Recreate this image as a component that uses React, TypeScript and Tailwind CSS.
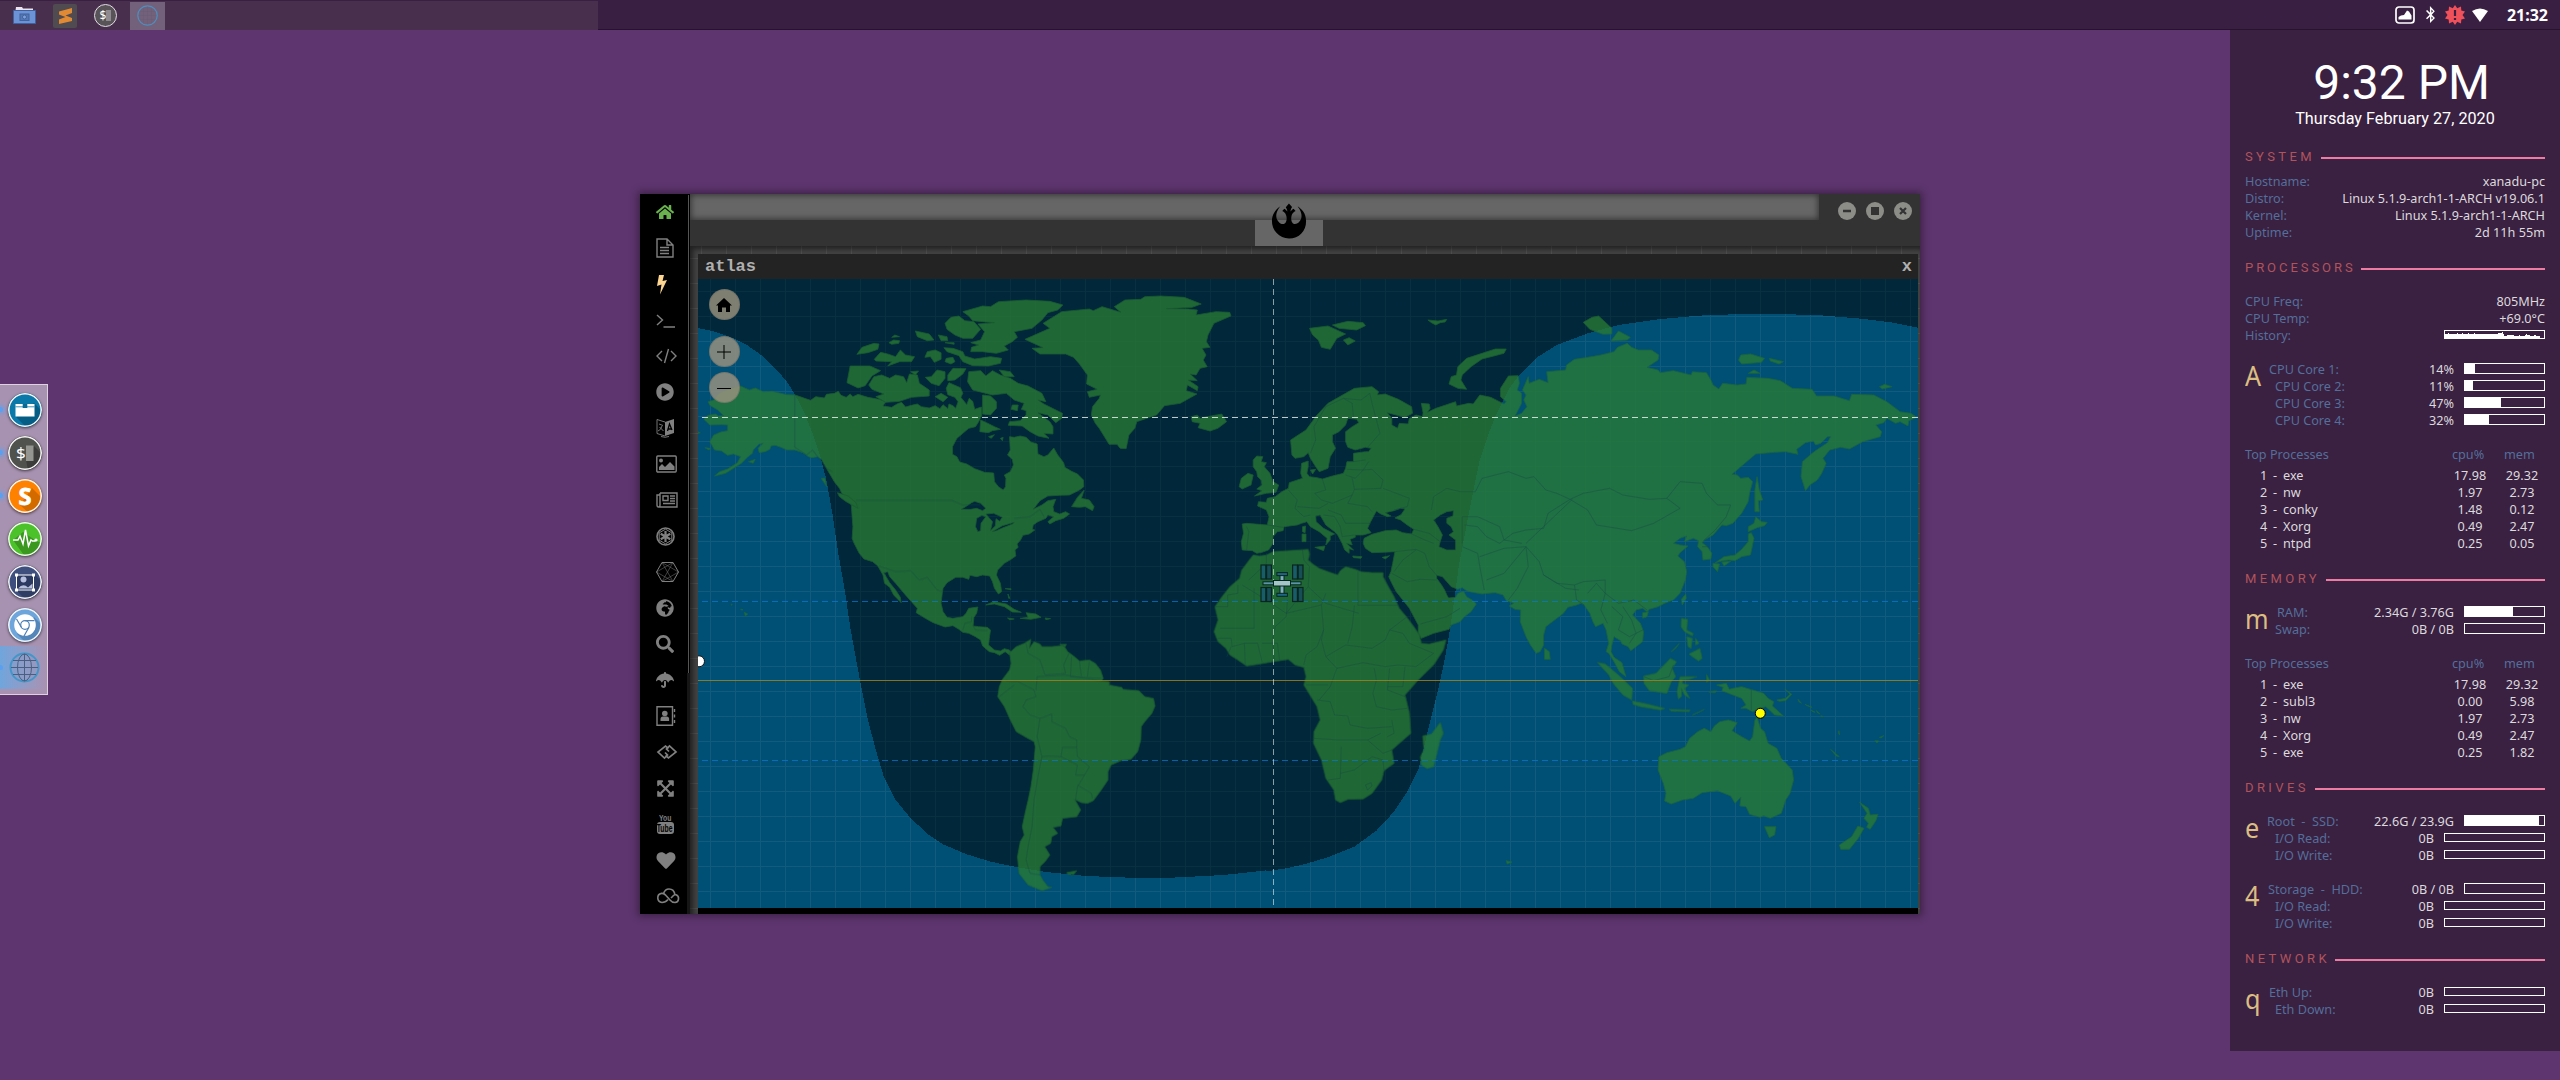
import React from "react";
import { FaHome, FaSearch, FaHeart, FaUmbrella, FaRebel, FaPlayCircle, FaExpandArrowsAlt, FaGlobeAfrica, FaBluetoothB } from "react-icons/fa";

/* ---------- map data: west and east halves use their own local units ---------- */

const WEST_LAND = [
  // North and Central America
  "M128 378L150 390L165 384L185 395L208 394L245 404L266 405L290 415L305 421L318 410L340 414L345 403L365 400L375 394L382 406L395 412L405 402L412 410L425 403L450 412L478 418L495 425L488 438L510 442L525 431L535 427L545 441L560 436L575 432L585 440L605 444L620 437L632 446L640 434L652 446L655 432L665 437L672 445L678 425L670 412L652 404L648 385L655 368L670 376L684 383L690 400L685 412L700 434L706 415L715 424L720 448L737 441L738 466L730 485L722 500L705 505L690 520L675 535L664 560L664 583L675 590L682 606L700 612L720 626L745 637L768 639L770 665L780 680L792 690L798 680L799 655L795 645L810 635L818 615L815 598L803 585L810 570L808 530L820 532L835 528L850 532L862 546L878 552L880 582L895 590L905 585L920 564L930 585L945 608L948 622L965 634L980 642L995 660L996 680L985 690L960 705L935 706L905 708L885 722L868 748L890 735L905 722L925 718L918 740L920 755L935 762L950 755L960 762L945 775L925 782L910 792L905 785L920 770L905 765L900 775L880 785L868 795L866 808L872 810L858 822L842 826L836 840L827 852L830 862L822 870L824 888L812 898L795 910L778 930L775 945L785 970L788 995L780 1002L770 985L765 965L758 948L740 945L725 950L708 946L705 958L690 952L672 952L650 968L640 985L638 1000L635 1030L640 1055L650 1072L665 1075L690 1070L698 1060L705 1045L728 1041L725 1060L718 1072L716 1098L730 1100L752 1102L760 1110L757 1135L755 1155L770 1170L785 1173L795 1166L808 1170L812 1178L808 1185L797 1175L783 1186L770 1178L757 1175L740 1158L735 1140L722 1130L705 1120L690 1117L680 1108L665 1097L645 1101L615 1088L595 1075L572 1058L575 1045L560 1025L545 1005L520 970L505 950L500 935L490 938L505 968L520 990L532 1012L534 1028L515 1005L505 982L492 970L488 945L475 918L462 905L440 897L428 880L415 850L410 835L412 800L410 770L408 735L398 714L385 702L378 685L365 665L355 645L345 625L332 597L322 590L308 593L300 590L285 578L265 570L245 570L230 562L215 556L205 558L202 568L190 575L175 578L172 565L185 550L175 552L160 570L158 580L145 592L130 610L110 625L90 640L62 648L75 635L95 627L120 608L128 590L110 582L95 586L80 573L62 570L55 555L50 545L60 525L78 516L95 512L95 495L80 494L50 495L35 478L45 466L65 462L72 468L85 467L70 450L50 436L46 425L60 420L75 400L100 388ZM686 748L700 738L712 728L720 724L735 730L748 745L740 752L725 745L710 748ZM738 766L725 775L722 800L728 815L735 812L736 790L748 770ZM748 762L768 760L790 772L783 784L774 776L772 798L760 812L765 785ZM764 815L790 797L820 787L816 792L790 804L775 812Z",
  // Canadian archipelago
  "M405 318L455 318L482 332L460 348L443 377L425 384L397 368ZM452 375L465 350L485 345L505 355L520 345L540 350L548 368L555 342L575 345L580 370L605 390L605 408L560 412L530 424L495 427L470 410L490 402L460 388ZM422 283L435 262L465 250L478 252L475 268L450 278ZM466 298L482 277L500 282L520 290L532 270L545 285L568 290L560 305L530 305L500 318L510 305L470 303ZM503 248L515 240L530 242L528 250L510 253ZM510 232L518 225L530 230ZM570 213L605 222L617 240L600 242L575 230ZM628 225L650 230L652 242L635 242ZM645 248L668 248L668 253ZM594 292L600 275L620 270L635 278L635 298L618 307L608 290ZM648 295L665 292L670 305L660 312L645 305Z",
  "M642 263L665 265L690 275L695 288L720 297L760 290L788 295L785 310L755 318L715 317L690 305L680 287L650 275ZM645 190L660 172L680 168L695 182L718 185L735 208L715 235L690 235L670 225L650 208ZM690 155L740 138L760 140L780 125L850 120L910 124L943 135L930 150L905 158L890 180L865 205L820 215L828 232L815 245L795 258L805 270L775 280L740 275L710 275L712 262L730 255L710 248L735 240L745 215L728 192L770 188L740 185L715 182L705 168Z",
  "M705 335L735 332L748 348L765 332L785 345L810 355L830 370L855 378L890 400L900 425L880 420L895 432L942 460L940 475L925 488L905 465L880 458L910 485L918 500L918 522L895 520L908 535L880 528L860 515L840 498L805 496L808 485L835 482L850 465L850 452L838 448L845 430L820 420L800 400L765 405L715 390L702 365ZM782 330L810 335L820 350L795 350ZM652 345L665 325L698 326L690 342L670 360L652 362ZM595 352L610 350L625 330L645 335L645 355L630 377L610 370ZM620 410L635 400L652 412L640 425ZM740 405L760 408L775 425L775 445L760 465L740 462ZM733 515L735 480L750 488L770 500L785 508L765 512L755 518ZM815 435L830 435L828 452L812 448ZM755 530L770 524L762 535ZM785 535L792 532L790 542ZM558 335L578 333L570 345Z",
  "M965 740L980 712L997 690L990 715L1010 720L1022 740L1018 752L1000 740L985 742ZM373 698L400 708L420 728L425 745L395 725L378 710ZM332 655L341 654L346 680ZM148 605L165 598L160 610ZM38 563L52 565L48 570ZM20 515L26 518L20 521Z",
  // Greenland and Iceland
  "M847 238L910 205L893 190L940 155L1010 147L1020 152L1042 140L1090 157L1073 140L1100 120L1140 118L1150 110L1190 108L1250 112L1293 132L1270 142L1205 146L1260 147L1283 150L1280 165L1330 155L1365 157L1368 168L1325 190L1310 225L1306 245L1315 262L1295 265L1305 285L1298 300L1308 320L1290 325L1280 345L1265 342L1283 362L1260 360L1285 380L1283 392L1258 375L1255 392L1282 402L1240 430L1200 437L1180 465L1130 485L1125 505L1110 525L1103 566L1088 565L1080 553L1060 553L1035 505L1025 490L1015 465L1018 440L1035 415L1038 405L1010 412L1005 395L1030 388L1003 372L1005 345L985 312L970 292L950 282L885 282L865 265L893 263Z",
  "M1268 470L1283 465L1290 475L1308 470L1345 462L1357 485L1335 505L1315 513L1285 503L1290 490L1270 485Z",
  // Caribbean and Hawaii
  "M748 1035L768 1025L800 1032L820 1048L838 1057L815 1056L795 1040L770 1032ZM835 1075L855 1072L850 1058L875 1062L888 1072L862 1078ZM803 1074L820 1077L808 1079ZM898 1074L912 1076L900 1079ZM797 986L812 986L812 989ZM804 1002L809 1015L806 1015ZM137 1057L146 1062L140 1068ZM128 1047L134 1049L131 1051ZM104 1032L107 1034L105 1036Z",
  // South America
  "M808 1178L825 1160L845 1150L862 1138L858 1165L870 1145L885 1152L890 1160L915 1160L930 1158L945 1156L955 1175L970 1188L985 1203L1010 1200L1025 1210L1038 1230L1045 1255L1040 1263L1060 1265L1060 1275L1092 1282L1095 1288L1135 1292L1150 1310L1172 1315L1176 1338L1168 1360L1150 1385L1141 1400L1140 1440L1132 1475L1115 1498L1090 1502L1065 1515L1057 1535L1057 1560L1040 1590L1020 1622L1005 1630L990 1628L973 1618L988 1650L978 1670L942 1675L938 1698L918 1702L930 1720L915 1730L912 1750L897 1760L910 1785L898 1805L885 1820L885 1845L892 1860L905 1880L915 1882L890 1892L855 1875L832 1840L828 1790L835 1745L845 1725L840 1700L848 1655L855 1620L862 1580L868 1530L873 1460L870 1445L850 1432L825 1415L810 1380L795 1340L778 1310L782 1280L790 1258L808 1230L812 1210ZM952 1838L978 1832L970 1844L955 1842ZM935 1153L952 1153L948 1160Z",
];

const EAST_LAND = [
  // Eurasia with the Caspian Sea cut out
  "M115 540L150 510L175 465L200 430L240 400L260 385L300 380L315 395L312 405L330 402L360 418L390 440L392 460L375 472L335 458L345 475L345 495L358 505L362 490L382 492L385 475L400 465L415 470L416 458L412 430L430 432L432 445L426 457L445 445L490 425L492 438L520 430L530 432L545 405L570 412L600 432L605 425L592 410L592 385L610 348L632 347L635 370L630 390L640 400L640 430L625 468L640 460L652 440L645 420L650 405L642 390L655 350L657 370L680 358L700 368L697 335L740 330L742 315L760 298L790 292L820 285L850 275L858 262L880 250L890 262L905 270L935 270L952 285L950 300L925 322L950 330L955 338L985 332L1025 345L1028 335L1060 338L1070 360L1075 375L1088 387L1097 370L1130 375L1150 372L1152 352L1200 355L1228 362L1255 385L1300 388L1310 408L1350 408L1385 422L1390 403L1440 405L1470 425L1500 455L1525 460L1538 472L1520 482L1518 498L1500 485L1490 490L1470 475L1463 488L1445 495L1458 515L1455 530L1415 545L1385 567L1365 562L1340 570L1325 595L1332 610L1322 640L1312 660L1295 675L1285 692L1275 650L1278 605L1300 580L1310 570L1335 548L1342 530L1335 530L1320 550L1308 555L1303 543L1285 548L1265 568L1268 583L1240 575L1215 577L1172 582L1118 643L1130 645L1138 655L1155 652L1165 665L1158 700L1155 725L1140 760L1120 790L1105 797L1095 795L1075 825L1055 840L1050 848L1062 860L1072 880L1070 897L1052 900L1050 875L1040 860L1042 842L1030 835L1010 845L1015 828L1000 835L985 850L1000 855L1018 858L1000 878L995 888L1010 905L1015 935L1012 960L1000 1000L985 1020L965 1030L950 1040L930 1048L925 1055L915 1045L900 1050L892 1065L910 1090L917 1115L915 1145L900 1160L888 1172L882 1160L868 1152L865 1142L850 1130L845 1155L843 1175L850 1192L868 1208L877 1250L862 1235L850 1205L838 1180L832 1175L838 1150L832 1110L825 1090L808 1100L802 1085L795 1060L782 1035L775 1030L765 1035L745 1042L735 1060L720 1075L705 1090L695 1100L690 1125L690 1155L682 1175L673 1180L660 1155L650 1130L637 1085L638 1050L625 1048L612 1038L622 1030L605 1022L598 1005L580 998L550 1002L525 996L515 992L505 983L495 988L480 980L470 965L460 950L447 946L447 955L458 975L465 990L470 1005L474 1014L490 1012L495 1000L508 994L515 1010L530 1022L537 1032L525 1055L510 1070L500 1085L480 1095L475 1108L440 1120L412 1135L405 1120L405 1095L395 1070L385 1045L370 1020L355 995L345 970L338 950L343 935L347 910L352 875L325 877L300 878L285 865L280 850L282 835L300 823L330 812L355 810L370 818L390 822L395 808L380 795L365 780L352 774L366 764L375 747L365 745L350 752L330 758L343 768L335 770L320 762L310 753L305 765L295 790L290 805L298 818L280 825L262 825L262 832L250 838L255 855L242 850L258 870L248 866L248 880L238 870L232 850L222 825L215 815L195 795L182 765L172 768L173 785L190 805L215 822L205 828L205 840L195 855L198 835L180 815L160 800L152 785L140 790L130 795L100 800L98 812L85 815L75 830L75 850L65 870L50 877L38 880L28 872L5 870L3 845L8 820L5 792L15 790L62 795L66 770L60 750L40 738L42 725L60 727L62 715L80 710L95 695L110 685L112 668L135 658L142 655L138 640L140 610L155 603L155 620L152 640L158 650L175 653L187 657L210 648L235 640L240 625L243 605L258 605L258 580L285 575L292 575L298 565L285 562L262 570L245 562L240 545L240 515L255 500L270 488L265 478L245 475L240 495L225 515L210 525L210 545L217 565L205 590L200 625L180 635L172 620L160 595L155 578L145 590L125 595L118 585ZM470 755L485 752L484 768L470 775L470 790L480 800L485 815L475 825L490 840L490 870L470 870L452 860L455 845L460 825L450 800L440 780L455 765Z",
  // British Isles and Mediterranean islands
  "M30 600L38 588L52 590L48 605L60 608L55 620L68 640L75 665L88 675L82 697L60 700L33 708L50 692L38 687L50 675L48 660L40 650L38 635L30 620ZM3 655L18 640L30 645L25 675L5 687L-2 680ZM142 800L149 798L148 818L142 815ZM141 822L150 822L150 845L141 845ZM170 862L193 858L190 872ZM256 888L277 890L275 895L258 893ZM323 892L340 887L330 897ZM160 630L172 628L165 642Z",
  // Arctic islands
  "M158 205L200 198L240 222L220 235L205 268L185 262L178 240L165 225ZM210 195L245 184L280 188L285 197L265 210L225 205ZM235 240L248 233L262 243L245 255ZM427 180L450 183L470 178L466 186L455 188L445 195L435 188ZM605 267L600 280L550 297L525 320L505 345L502 360L515 388L495 385L475 372L480 350L492 345L495 320L515 295L550 280L580 267ZM780 187L800 172L815 168L845 205L845 222L825 223L795 208ZM843 243L860 213L887 232L880 240ZM1133 300L1138 285L1160 282L1192 295L1185 307L1140 312ZM1203 295L1235 305L1225 312L1205 303ZM1155 340L1168 330L1182 340ZM1453 380L1465 373L1482 380L1460 387Z",
  // Japan, Taiwan and neighbours
  "M1175 650L1180 690L1188 720L1178 722L1180 755L1170 755L1170 690ZM1172 770L1185 785L1198 787L1192 797L1175 803L1155 815L1155 800L1168 790ZM1162 818L1168 835L1160 885L1140 890L1125 902L1110 900L1095 903L1080 908L1100 890L1125 885L1140 868L1155 845L1155 822ZM1075 910L1090 912L1085 935L1075 920ZM1095 906L1115 904L1100 918ZM1013 1002L1014 1015L1005 1035L1003 1018ZM915 1058L928 1055L925 1070L915 1075ZM692 1165L703 1175L705 1198L692 1198Z",
  // South-east Asia
  "M812 1207L830 1212L860 1245L892 1285L890 1320L870 1305L848 1270L838 1245ZM892 1323L925 1332L965 1345L955 1350L910 1340L893 1333ZM917 1248L945 1240L978 1195L992 1205L982 1225L990 1250L980 1265L970 1300L930 1292L918 1270ZM1000 1250L1038 1250L1020 1258L1005 1260L1005 1270L1020 1275L1010 1285L1022 1315L1010 1305L1003 1285L1003 1310L996 1317L993 1295ZM1003 1075L1017 1078L1015 1110L1030 1120L1028 1128L1010 1115L1002 1100ZM1020 1182L1045 1165L1050 1195L1042 1203L1030 1192ZM1015 1130L1028 1135L1025 1165L1018 1160ZM980 1175L998 1150L990 1165ZM1035 1135L1043 1150L1035 1155ZM1060 1243L1067 1260L1060 1267ZM1065 1296L1083 1292L1080 1298ZM1028 1365L1055 1348L1040 1358ZM975 1348L1023 1350L1020 1355L980 1353Z",
  "M1083 1275L1105 1270L1112 1288L1120 1285L1140 1280L1190 1300L1200 1315L1213 1325L1210 1338L1235 1368L1215 1365L1195 1340L1180 1345L1165 1355L1150 1345L1138 1345L1150 1335L1140 1315L1110 1300L1095 1292L1098 1282ZM1220 1320L1240 1315L1250 1303L1238 1287L1254 1303L1240 1322L1225 1324ZM1268 1318L1276 1330L1270 1325ZM1284 1333L1300 1342L1288 1337ZM1298 1350L1307 1357L1300 1354ZM1310 1352L1318 1362L1312 1358ZM1320 1367L1326 1370L1321 1370ZM1361 1412L1363 1425L1360 1420ZM1342 1468L1362 1490L1355 1488ZM1443 1442L1452 1443L1447 1449ZM1453 1432L1463 1427L1457 1434Z",
  // Australia and New Zealand
  "M965 1623L968 1600L962 1570L950 1530L952 1490L970 1478L1000 1468L1012 1460L1022 1435L1040 1415L1055 1405L1070 1415L1078 1398L1090 1385L1110 1380L1130 1388L1118 1412L1140 1430L1158 1443L1165 1430L1170 1380L1175 1372L1183 1405L1192 1415L1200 1450L1220 1465L1230 1495L1255 1530L1258 1560L1250 1600L1240 1620L1230 1660L1205 1675L1190 1667L1182 1672L1158 1663L1150 1640L1136 1638L1138 1612L1125 1630L1115 1608L1085 1592L1050 1598L1030 1615L1005 1620L980 1632ZM1192 1700L1218 1700L1215 1725L1203 1733ZM1408 1627L1428 1645L1432 1665L1450 1663L1445 1682L1432 1708L1424 1702L1428 1690L1418 1675L1425 1660ZM1404 1698L1418 1705L1405 1735L1385 1768L1365 1768L1362 1755L1390 1730ZM605 1802L618 1806L607 1812Z",
  // Africa and Madagascar
  "M30 885L45 888L60 885L75 875L155 868L158 882L155 900L165 912L180 925L200 935L222 945L228 932L240 920L262 928L275 935L300 938L325 938L325 950L335 975L350 1010L362 1045L378 1070L395 1100L408 1125L412 1150L430 1152L468 1140L462 1170L440 1215L405 1260L375 1305L385 1360L388 1420L345 1470L350 1510L327 1532L322 1560L300 1600L280 1617L245 1618L228 1628L217 1620L213 1590L195 1555L185 1500L167 1450L168 1415L182 1380L175 1340L145 1275L150 1250L145 1222L125 1215L110 1198L75 1205L45 1212L15 1218L-5 1200L-23 1185L-32 1165L-50 1145L-59 1115L-50 1080L-57 1040L-41 1010L-23 980L-1 955L4 930L21 900ZM455 1387L462 1420L455 1440L440 1520L425 1526L412 1515L410 1490L418 1468L415 1428L435 1422Z",
];

const WEST_BORDERS =
  "M265 405L265 562L295 585L310 570L345 625L360 635M420 721L662 721L690 735L735 735M820 775L860 770L885 748L895 770M478 918L520 935L558 932L580 960L600 952L625 990L638 995M712 1070L712 1085L695 1090L690 1110M716 1098L722 1110L752 1112M850 1150L855 1180L885 1200L898 1245L950 1240L945 1215L958 1180M965 1190L962 1250L1040 1255M985 1205L990 1248M1010 1205L1005 1250M800 1262L830 1265L870 1290L875 1310L850 1320L842 1340L860 1365L885 1375L915 1362L915 1385L950 1405L960 1430L978 1440L978 1462L942 1462L938 1490L980 1515L975 1545L998 1545L1010 1520L980 1490L978 1462M782 1310L820 1275M885 1375L878 1430L890 1490L905 1488L938 1490M890 1490L880 1550L870 1620L865 1700L855 1760L850 1800L860 1840L885 1845M998 1545L980 1580L975 1618M980 1575L1015 1600L1018 1615M1040 1263L950 1245L878 1250L875 1290";

const EAST_BORDERS =
  "M160 580L172 540L168 500L195 440L235 415L255 430L258 475M235 415L275 420L295 400L300 430L318 520L290 562M258 605L285 600M243 628L280 630L292 605M240 645L262 655L280 630L300 628L325 660L320 685L260 688L255 655M187 657L195 690L170 700L185 720L210 730L255 705M110 690L130 720L125 745L145 770L160 765M130 740L180 745L200 730M260 688L255 705L245 730L290 740L300 755M325 685L385 715L380 740L350 750M200 750L230 765L240 790L280 790L298 790M190 765L215 770L228 800L232 830L260 825M62 795L98 802M15 800L20 815L15 870M395 808L430 820L455 845M390 822L420 840L440 850M352 875L400 868L420 880L430 920L447 946M350 935L370 900L400 870M345 940L380 965L410 958L447 960M435 750L440 710L470 685L500 695L535 695L550 655L610 635L650 655L668 650L695 690L720 700L750 718L700 760L690 805L650 810L620 820L590 850L560 830L540 800L510 795M505 850L505 770L540 770L590 800L600 840L640 850M505 860L540 880L545 920L555 990M545 890L600 865L650 860L600 940L560 960M650 860L680 905L690 945L720 970L760 975L780 965L830 960L830 1000L860 1030L895 1020L925 1050M690 945L740 985L770 990M610 1020L630 985L655 920L650 860M750 718L780 700L840 685L870 705L930 718L970 715L1000 745L940 790L890 812L810 795L790 750L750 718M970 715L1000 665L1050 670L1060 700L1085 735L1115 735L1105 770L1080 810L1055 840M760 975L765 1020L782 1035M790 1000L810 970L830 1000L820 1050L835 1090M845 1040L870 1070L860 1110L885 1130L915 1110M870 1040L890 1080L900 1120L885 1150M755 718L650 850M1162 1287L1162 1350M918 1250L940 1262L975 1250L985 1215M1050 860L1065 860M410 1092L470 1070L500 1045M20 960L60 910L60 880M142 870L145 900L158 920L155 980L195 1030L270 1060M268 935L268 1036L360 1036M155 980L105 1060L60 1020L5 975M32 985L32 1105L-45 1105M108 1020L105 1070L80 1100L75 1135M105 1060L185 1035L195 1000M185 1035L190 1110L175 1160L150 1185L145 1215M-5 975L-5 1000L-28 1005L-28 1040L-57 1040M-50 1135L-20 1135L-18 1160L10 1150L40 1150L50 1205M50 1150L85 1150L90 1200M75 1145L78 1205M-20 1160L-30 1190M10 1150L12 1215M190 1110L185 1140L195 1190L240 1155L300 1165L330 1140L340 1110L380 1070M260 1036L255 1100L245 1150M195 1190L220 1225L280 1208L330 1220L360 1215L400 1220L440 1180L385 1150L370 1120L340 1110M220 1225L205 1280L180 1320M305 1225L310 1260L302 1300L310 1340L345 1350L380 1345M150 1275L200 1275M175 1320L205 1325L215 1365L245 1368L250 1395L290 1405L345 1400M167 1435L225 1440L290 1440L320 1420M230 1460L228 1555L200 1560M228 1540L260 1530L300 1490L325 1500L327 1530M290 1440L325 1480L345 1470M345 1380L350 1420L335 1430M285 1575L298 1568L300 1578L290 1590L285 1575M375 1220L370 1280L335 1280M340 1225L335 1290L375 1310";

const WEST_NIGHT =
  "M20 50L20 204L60 214L100 230L140 252L180 285L220 330L245 365L266 405L290 460L310 520L330 590L345 660L360 760L375 880L390 980L405 1100L430 1262L450 1380L470 1470L490 1550L520 1620L555 1670L600 1722L640 1753L700 1783L760 1805L830 1822L900 1836L1000 1848L1110 1853L1220 1853L1350 1845L1475 1829L1475 50Z";
const EAST_NIGHT =
  "M60 50L60 1834L100 1826L140 1815L200 1792L260 1760L310 1712L350 1655L380 1595L405 1530L420 1450L435 1370L450 1290L465 1200L477 1110L487 1020L497 920L507 850L520 760L532 680L545 600L565 520L580 470L595 430L612 385L635 345L675 292L720 255L790 220L860 195L950 178L1040 167L1140 162L1230 162L1320 166L1410 176L1480 187L1545 204L1545 50Z";

const WEST = "translate(690 260) scale(0.39541 0.33333)";
const EAST = "translate(1240 260) scale(0.44005 0.33333)";

function Station() {
  const panel = (x: number, y: number) => (
    <g key={`${x}-${y}`}>
      <rect x={x} y={y} width="4.8" height="14" fill="#1a5d6a" stroke="#08261f" strokeWidth="1.2" />
      <rect x={x + 5.6} y={y} width="4.8" height="14" fill="#174f58" stroke="#08261f" strokeWidth="1.2" />
    </g>
  );
  return (
    <g>
      {panel(1261, 565)}
      {panel(1292.6, 565)}
      {panel(1261, 587.5)}
      {panel(1292.6, 587.5)}
      <rect x="1263" y="581.8" width="38" height="3" fill="#5b93a8" stroke="#08261f" />
      <rect x="1280" y="573" width="4" height="22" fill="#7fb0bd" stroke="#08261f" />
      <rect x="1276.900" y="572.6" width="10.500" height="3" fill="#1c6685" stroke="#08261f" />
      <rect x="1276.900" y="593.3" width="10.500" height="3" fill="#1c6685" stroke="#08261f" />
      <rect x="1273.500" y="580.5" width="17" height="5.500" fill="#a5c6c6" stroke="#08261f" />
    </g>
  );
}

function WorldMap() {
  return (
    <svg className="block h-[629px] w-[1220px]" viewBox="698 279 1220 629">
      <defs>
        <pattern id="graticule" x="710" y="291" width="25" height="25" patternUnits="userSpaceOnUse">
          <path d="M0 0H25V1H1V25H0Z" fill="#fff" />
        </pattern>
      </defs>
      <rect x="698" y="279" width="1220" height="629" fill="#005075" />
      <rect x="698" y="279" width="1220" height="629" fill="url(#graticule)" opacity="0.03" />
      <g fill="#00283a" shapeRendering="crispEdges">
        <path d={WEST_NIGHT} transform={WEST} />
        <path d={EAST_NIGHT} transform={EAST} />
      </g>
      <rect x="698" y="279" width="1220" height="629" fill="url(#graticule)" opacity="0.035" />
      <g opacity="0.77" fill="#297b33" fillRule="evenodd" stroke="#226b30" strokeWidth="0.8" strokeLinejoin="round">
        {WEST_LAND.map((d) => (
          <path key={d} d={d} transform={WEST} vectorEffect="non-scaling-stroke" />
        ))}
        {EAST_LAND.map((d) => (
          <path key={d} d={d} transform={EAST} vectorEffect="non-scaling-stroke" />
        ))}
      </g>
      <g fill="none" stroke="#17494a" strokeOpacity="0.5" strokeWidth="0.8" strokeLinejoin="round">
        <path d={WEST_BORDERS} transform={WEST} vectorEffect="non-scaling-stroke" />
        <path d={EAST_BORDERS} transform={EAST} vectorEffect="non-scaling-stroke" />
      </g>
      <g fill="none">
        <path d="M702 417.5H1918" stroke="#fff" strokeOpacity="0.75" strokeDasharray="6 4" />
        <path d="M702 601.5H1918M702 760.5H1918" stroke="#0a78d8" strokeOpacity="0.7" strokeDasharray="6 4" />
        <path d="M698 680.5H1918" stroke="#a8841a" strokeOpacity="0.8" />
        <path d="M1273.5 279V908" stroke="#fff" strokeOpacity="0.55" strokeDasharray="6 4" />
      </g>
      <Station />
      <circle cx="699" cy="661.3" r="5.5" fill="#fff" stroke="#111" />
      <circle cx="1760.3" cy="713.3" r="5" fill="#ff0" stroke="#000" />
    </svg>
  );
}

/* ---------- window ---------- */

const line = { fill: "none", stroke: "currentColor", strokeWidth: 1.4 } as const;

const SIDEBAR: React.ReactNode[] = [
  <FaHome className="size-[18px] text-[#6ab150]" />,
  <svg className="h-5 w-[18px]" viewBox="0 0 18 20" {...line}><path d="M1 1h10l6 6v12H1zM11 1v6h6M4 9.5h9M4 12.500h9M4 15.500h9" /></svg>,
  <svg className="mt-px h-5 w-[11px]" viewBox="0 0 11 20" fill="#fdd692"><path d="M3 0h5L6.500 6 11 5 4 19.500 5.500 9.500 1 11z" /></svg>,
  <svg className="mt-0.5 h-4 w-[19px]" viewBox="0 0 19 16" {...line}><path d="M1 2l5.500 5L1 12M7.500 14H19" /></svg>,
  <svg className="h-4 w-[21px]" viewBox="0 0 21 16" {...line}><path d="M6 3L1 8l5 5M15 3l5 5-5 5M12.500 1l-4 14" /></svg>,
  <FaPlayCircle className="size-[18px]" />,
  <svg className="h-5 w-[18px]" viewBox="0 0 18 20"><path d="M9 4l9-3v14l-9 3z" fill="currentColor" /><path d="M11.500 13l2-7 2.500 6M12 11h3.500" stroke="#000" strokeWidth="1.300" fill="none" /><path d="M9 4L1 1.500v14L9 18M3 6l4 1.500M6 8q-1 4-4 5M3.500 9l4 4M5 18.500q4 1.500 8 0" stroke="currentColor" strokeWidth="0.9" fill="none" /></svg>,
  <svg className="h-[18px] w-[21px]" viewBox="0 0 21 18"><rect x="0.8" y="1" width="19.400" height="16" rx="1" {...line} /><circle cx="5" cy="5.500" r="2" fill="currentColor" /><path d="M3 15v-3l3-3 3 3 5-5 4.500 4.500V15z" fill="currentColor" /></svg>,
  <svg className="h-4 w-[22px]" viewBox="0 0 22 16" {...line}><path d="M4 1h17v14H2.500Q1 15 1 13V3h3M4 1v12q0 2-1.500 2M7 4h5v4.500H7zM14 4h5M14 6.500h5M14 9h5M7 11.500h12" /></svg>,
  <svg className="size-[19px]" viewBox="0 0 19 19" fill="none" stroke="currentColor"><circle cx="9.500" cy="9.500" r="8.500" strokeWidth="1.600" /><path d="M9.500 2.200l6.300 3.600v7.400l-6.300 3.600-6.300-3.600V5.800z" strokeWidth="1" /><path d="M9.500 4v11M4.700 6.700l9.600 5.600M14.300 6.700l-9.600 5.600" strokeWidth="2.200" /></svg>,
  <svg className="h-5 w-[23px]" viewBox="0 0 23 20" fill="none" stroke="currentColor"><path d="M6 .5h11l5.500 9.500L17 19.500H6L.5 10z" strokeWidth="1" /><path d="M6 .5l16.500 9.500L6 19.500M17 .5L.5 10 17 19.500M6 .5l11 19M17 .5L6 19.500" strokeWidth="0.600" strokeOpacity="0.8" /></svg>,
  <FaGlobeAfrica className="size-[18px]" />,
  <FaSearch className="size-[18px]" />,
  <FaUmbrella className="size-[18px]" />,
  <svg className="h-5 w-5" viewBox="0 0 20 20"><path d="M1 .8h15.500v18.400H1zM18.500 3v3M18.500 8.500v3M18.500 14v3" {...line} /><circle cx="8.800" cy="7.500" r="2.800" fill="currentColor" /><path d="M4.500 15v-2q0-2.500 2.500-2.500h3.600q2.500 0 2.500 2.500v2z" fill="currentColor" /></svg>,
  <svg className="h-4 w-[22px]" viewBox="0 0 22 16" fill="none" stroke="currentColor" strokeWidth="1.700"><path d="M12.500 4.500L9.500 2 2 8l6.500 6 3-3L9 8.500M9.500 11.500l3 2.500L20 8l-6.500-6-3 3L13 7.500" /></svg>,
  <FaExpandArrowsAlt className="size-[19px]" />,
  <span className="flex w-[18px] flex-col items-center">
    <span className="scale-x-75 font-['Liberation_Sans'] text-[9px] leading-[8px] font-bold">You</span>
    <span className="flex h-[12px] w-[17px] items-center justify-center rounded-[3px] bg-[#808080]"><span className="scale-x-[.68] font-['Liberation_Sans'] text-[10px] leading-[11px] font-bold text-black">Tube</span></span>
  </span>,
  <FaHeart className="h-[19px] w-5" />,
  <svg className="h-4 w-6" viewBox="0 0 24 16" fill="none" stroke="currentColor" strokeWidth="1.600"><path d="M12 11.500Q9.500 14.500 6 14.500A4.600 4.600 0 0 1 5.500 5.400Q8 5 10 7.500L14 12Q16 14.500 19 14.500A4 4 0 0 0 20 6.800Q18 6.500 16.500 8.500L15 10M7.500 5.600Q9 1 13 1Q18 1 19 6.800" /></svg>,
];

function Sidebar() {
  return (
    <div className="flex h-[720px] w-[50px] shrink-0 bg-black">
      <div className="flex w-12 flex-col text-[#808080]">
        {SIDEBAR.map((icon, i) => (
          <div key={i} className="flex h-9 items-center pl-4">{icon}</div>
        ))}
      </div>
      <div className="flex w-0.5 flex-col">
        <div className="mt-px h-[478px] w-px bg-[#555]" />
        <div className="-ml-px flex-1 bg-[#161616]" />
      </div>
    </div>
  );
}

function WindowButton({ kind }: { kind: "min" | "max" | "close" }) {
  return (
    <div className="flex size-[18px] items-center justify-center rounded-full bg-[#8c8d87]">
      <svg className="size-2" viewBox="0 0 8 8" fill="none" stroke="#333">
        {kind === "min" && <path d="M0 4h8" strokeWidth="2.500" />}
        {kind === "max" && <rect width="8" height="8" fill="#333" stroke="none" />}
        {kind === "close" && <path d="M1 1l6 6M7 1l-6 6" strokeWidth="2.200" />}
      </svg>
    </div>
  );
}

function MapButton({ children }: { children: React.ReactNode }) {
  return (
    <div className="flex size-[31px] items-center justify-center rounded-full border border-[#6b6a60]/60 bg-[#9e9380]/80 text-black">
      {children}
    </div>
  );
}

function AppWindow() {
  return (
    <div className="flex h-[720px] w-[1280px] bg-[#333] shadow-[0_0_8px_2px_rgba(0,0,0,0.4)]">
      <Sidebar />
      <div className="flex min-w-0 flex-1 flex-col">
        <div className="flex h-[26px] shrink-0 justify-between">
          <div className="w-[1129px] bg-[#666] shadow-[inset_0_0_6px_1px_rgba(0,0,0,0.5)]" />
          <div className="flex items-center gap-[10px] pt-2 pr-2 pb-0">
            <WindowButton kind="min" />
            <WindowButton kind="max" />
            <WindowButton kind="close" />
          </div>
        </div>
        <div className="flex h-[26px] shrink-0 pl-[565px]">
          <div className="relative flex w-[68px] justify-center bg-[#666]">
            <FaRebel className="absolute -top-[17px] size-9 text-black" />
          </div>
        </div>
        <div className="flex flex-1 flex-col bg-[#424242] bg-[repeating-linear-gradient(90deg,transparent_0,transparent_11px,rgba(255,255,255,.07)_11px,rgba(255,255,255,.07)_12px,transparent_12px,transparent_25px),repeating-linear-gradient(180deg,transparent_0,transparent_12px,rgba(255,255,255,.07)_12px,rgba(255,255,255,.07)_13px,transparent_13px,transparent_25px)] pt-2 pl-2 shadow-[inset_3px_3px_5px_rgba(0,0,0,0.5)]">
          <div className="flex h-[25px] w-[1220px] items-center justify-between bg-[#232323] pr-[6px] pl-[7px] font-['Liberation_Mono'] text-[17px] leading-[25px] font-bold text-[#b0b0b0]">
            <span>atlas</span>
            <span>x</span>
          </div>
          <div className="relative flex w-[1220px] flex-col bg-black pb-[6px]">
            <WorldMap />
            <div className="absolute top-[10px] left-[10.500px] flex flex-col">
              <MapButton>
                <svg className="h-[14px] w-4" viewBox="0 0 16 14"><path d="M8 0l8 7.500h-2V14h-4v-4.500H6V14H2V7.500H0z" fill="#000" /></svg>
              </MapButton>
              <div className="mt-4 mb-[5px]">
                <MapButton>
                  <svg className="size-4" viewBox="0 0 16 16" stroke="#000"><path d="M8 1v14M1 8h14" /></svg>
                </MapButton>
              </div>
              <MapButton>
                <svg className="size-4" viewBox="0 0 16 16" stroke="#000"><path d="M1 8.500h14" /></svg>
              </MapButton>
            </div>
          </div>
        </div>
      </div>
    </div>
  );
}

/* ---------- panels ---------- */

function TopBar() {
  return (
    <div className="flex h-[30px] shrink-0 justify-between border-b border-[#28132e] bg-[#391f42]">
      <div className="mt-px flex h-[29px] w-[598px] items-center bg-[#482f4e]">
        <div className="ml-[12px] flex w-[24px] justify-center">
          <svg className="h-[19px] w-[23px]" viewBox="0 0 23 19"><path d="M3 1h6l1 1.500h10V8H2z" fill="#ece3ee" /><path d="M.5 4.500h22v13H.5z" fill="#6c93d6" stroke="#3f61a0" /><rect x="7" y="8" width="9" height="6.500" fill="#5578b4" stroke="#41629c" /><circle cx="11.500" cy="11" r="2" fill="#7fa2de" stroke="#41629c" /></svg>
        </div>
        <div className="ml-[17px] flex size-6 items-center justify-center rounded-xs bg-[#504b50]">
          <svg className="h-4 w-[13px]" viewBox="0 0 13 16"><path d="M13 0v5L6.500 7.500 13 10v3L0 16v-4.500L6.500 9 0 6.500V3.500z" fill="#e28a33" /></svg>
        </div>
        <div className="ml-[17px] flex h-[23px] w-[23px] items-center justify-center rounded-full border-[1.500px] border-[#e3dbe5] bg-[#575357] font-['Noto_Sans'] text-[12px] leading-none text-white">
          $<span className="h-[11px] w-[5px] bg-[#8f8a8f]" />
        </div>
        <div className="ml-[13px] flex h-7 w-[35px] items-center justify-center bg-[#73617c]">
          <svg className="size-[21px]" viewBox="0 0 21 21" fill="none" stroke="#6a5c74"><path d="M6.500 2v17M10.500 1v19M14.500 2v17M2 6.500h17M1 10.500h19M2 14.500h17" strokeWidth="0.500" /><circle cx="10.500" cy="10.500" r="9.700" stroke="#4c8fc0" strokeWidth="1.200" /></svg>
        </div>
      </div>
      <div className="flex items-center pr-[12px] text-white">
        <svg className="h-[18px] w-5" viewBox="0 0 20 18"><rect x="1" y="1" width="18" height="16" rx="3" fill="none" stroke="#fff" strokeWidth="1.700" /><path d="M3.500 13.500V11L6 9.500l3-.5 3-4.500 2 1 2.500 4v4z" fill="#fff" /></svg>
        <FaBluetoothB className="ml-[8px] h-[17px] w-[15px]" />
        <svg className="ml-[7px] size-5" viewBox="0 0 20 20"><path d="M10 0l2.200 3.200L16 1.500l.3 4L20 6.500 17.500 10l2.500 3.500-3.700 1 -.3 4-3.800-1.700L10 20l-2.200-3.200L4 18.500l-.3-4L0 13.500 2.500 10 0 6.500l3.700-1L4 1.500l3.800 1.700z" fill="#f0505a" /><path d="M10 5v6M10 13v2" stroke="#3a1f42" strokeWidth="2.200" /></svg>
        <svg className="ml-[7px] h-[14px] w-4" viewBox="0 0 16 14"><path d="M0 3Q8-2 16 3L8 14z" fill="#fff" /></svg>
        <span className="ml-[19px] font-['Noto_Sans'] text-[16px] leading-none font-bold">21:32</span>
      </div>
    </div>
  );
}

const DOCK: { bg: string; art: React.ReactNode }[] = [
  { bg: "bg-[#0a78a8]", art: <><path d="M8 24l18-14 8 8v16H18z" fill="#055d85" /><path d="M7.500 11h19v12.500h-19z" fill="#fff" /><path d="M7.500 13.800h19" stroke="#0a78a8" strokeWidth="0.800" /><rect x="14.700" y="11" width="4.600" height="4" fill="#0a6a96" /></> },
  { bg: "bg-[#50524e]", art: <><path d="M18 24l8-14 8 8v16H20z" fill="#3c3d3a" /><text x="8" y="22.500" fontSize="17" fill="#fff" fontFamily="Noto Sans">$</text><rect x="18" y="9.500" width="7.500" height="15.500" fill="#949490" /></> },
  { bg: "bg-[#fe8200]", art: <><path d="M12 26L24 9l12 12v16H24z" fill="#d36a00" /><text x="10.500" y="25.600" fontSize="23.500" fontWeight="bold" fill="#fff" stroke="#fff" strokeWidth="0.800" fontFamily="Open Sans">S</text></> },
  { bg: "bg-[#4cc22a]", art: <><path d="M5 18l10-8 12 8 8 4v14H18z" fill="#3a981f" /><path d="M5 18h5l2-4 3 8 2.500-14 3 16 2.500-6 1.500 1h3" fill="none" stroke="#fff" strokeWidth="1.500" /><circle cx="28" cy="18" r="1.600" fill="#fff" /></> },
  { bg: "bg-[#3f4f7d]", art: <><path d="M9 26L26 9l10 10v18H20z" fill="#2f3c64" /><rect x="8.500" y="10" width="17" height="15" fill="#2c3960" stroke="#fff" /><circle cx="15.500" cy="14.500" r="3" fill="#b6bfdd" /><path d="M10 23.500q5-6 10-1l4.500-4v5z" fill="#b6bfdd" /><path d="M7 8.500h3v3H7zM24 8.500h3v3h-3zM7 23.500h3v3H7zM24 23.500h3v3h-3z" fill="#fff" /></> },
  { bg: "bg-[#6ea6dc]", art: <><path d="M9 26L26 9l10 10v18H20z" fill="#5486ba" /><circle cx="17" cy="17" r="10.800" fill="#fff" /><circle cx="17" cy="17" r="4.300" fill="#fff" stroke="#4f80b4" strokeWidth="1.200" /><path d="M17 12.600h9.500M13.200 19L8.500 11M21 19.200L16 28" stroke="#4f80b4" strokeWidth="1.200" /></> },
];

function Dock() {
  return (
    <div className="mt-[354px] flex h-[311px] w-12 shrink-0 flex-col border border-l-0 border-[#dcd3df] bg-[#a892b1] pt-[3px]">
      {DOCK.map(({ bg, art }, i) => (
        <div key={i} className="flex h-[43px] items-center">
          <div className={i < 3 ? "h-[5px] w-[3px] rounded-r-full bg-[#5aa0f0] shadow-[0_0_4px_2px_#5aa0f0aa]" : "w-[3px]"} />
          <div className={`ml-[4.500px] size-[34px] rounded-full shadow-[0_1px_3px_rgba(0,0,0,0.6)] ${bg}`}>
            <svg className="size-[34px] rounded-full" viewBox="0 0 34 34">
              {art}
              <circle cx="17" cy="17" r="16.200" fill="none" stroke="#f5f5f5" strokeWidth="1.600" />
            </svg>
          </div>
        </div>
      ))}
      <div className="flex h-[43px] items-center bg-linear-to-r from-[#6fa5dd] to-[#a892b1]">
        <div className="h-[5px] w-[3px] rounded-r-full bg-[#5aa0f0]" />
        <svg className="ml-[6px] size-[31px]" viewBox="0 0 31 31" fill="none">
          <circle cx="15.500" cy="15.500" r="14" stroke="#4596c8" strokeWidth="2" fill="#8a9cc8" fillOpacity="0.5" />
          <g stroke="#4a5f80"><ellipse cx="15.500" cy="15.500" rx="7" ry="13.500" /><path d="M15.500 2v27M2 15.500h27M4 8.500h23M4 22.500h23" /></g>
        </svg>
      </div>
    </div>
  );
}

function Heading({ children, rule, tracking = "tracking-[3.400px]" }: { children: string; rule: string; tracking?: string }) {
  return (
    <div className="flex h-[17px] justify-between">
      <span className={`font-['Roboto'] text-[13px] leading-[17px] text-[#b0545c] ${tracking}`}>{children}</span>
      <span className={`mt-[9px] h-0.5 bg-[#ee7ba2] ${rule}`} />
    </div>
  );
}

function Row({ label, value, indent = "", bar }: { label: string; value?: string; indent?: string; bar?: React.ReactNode }) {
  return (
    <div className="flex h-[17px] items-center whitespace-nowrap">
      <span className={`whitespace-pre text-[#546f9a] ${indent}`}>{label}</span>
      <span className="ml-auto text-[#dcdadd]">{value}</span>
      {bar}
    </div>
  );
}

function Meter({ pct }: { pct: number }) {
  return (
    <div className="ml-[10px] h-[11px] w-[81px] -translate-y-px border border-white">
      <div className="h-full bg-white" style={{ width: `${pct}%` }} />
    </div>
  );
}

function Graph() {
  return <div className="ml-[10px] h-[9px] w-[101px] -translate-y-px border border-white" />;
}

function Processes({ rows }: { rows: string[][] }) {
  return (
    <div className="mt-[17px]">
      <div className="flex h-[17px] text-[#546f9a]">
        <span className="w-[207px]">Top Processes</span>
        <span className="w-[52px]">cpu%</span>
        <span>mem</span>
      </div>
      <div className="mt-1 text-[#dcdadd]">
        {rows.map(([name, cpu, mem], i) => (
          <div key={i} className="flex h-[17px] pl-[15px]">
            <span className="w-[13px]">{i + 1}</span>
            <span className="w-[10px]">-</span>
            <span className="w-[171px]">{name}</span>
            <span className="flex w-8 justify-center">{cpu}</span>
            <span className="ml-5 flex w-8 justify-center">{mem}</span>
          </div>
        ))}
      </div>
    </div>
  );
}

function Glyph({ children }: { children: string }) {
  return <span className="absolute top-0 left-0 origin-left scale-x-90 text-[28px] leading-none text-[#dcbd82]">{children}</span>;
}

function SystemMonitor() {
  return (
    <div className="flex h-[1021px] w-[330px] flex-col bg-[#3a2041] pr-[15px] pl-[15px] font-['Noto_Sans'] text-[12.667px] leading-[17px]">
      <div className="mt-[25px] pl-[13px] text-center font-['Roboto'] text-[48px] leading-[56px] font-normal text-white">9:32 PM</div>
      <div className="-mt-[2px] h-[20px] text-center font-['Roboto'] text-[16.200px] leading-[20px] text-white">Thursday February 27, 2020</div>
      <div className="mt-[19px]"><Heading rule="w-[224px]">SYSTEM</Heading></div>
      <div className="mt-2">
        <Row label="Hostname:" value="xanadu-pc" />
        <Row label="Distro:" value="Linux 5.1.9-arch1-1-ARCH v19.06.1" />
        <Row label="Kernel:" value="Linux 5.1.9-arch1-1-ARCH" />
        <Row label="Uptime:" value="2d 11h 55m" />
      </div>
      <div className="mt-[18px]"><Heading rule="w-[184px]" tracking="tracking-[2.950px]">PROCESSORS</Heading></div>
      <div className="mt-[17px]">
        <Row label="CPU Freq:" value="805MHz" />
        <Row label="CPU Temp:" value="+69.0°C" />
        <Row
          label="History:"
          bar={
            <svg className="h-[9px] w-[101px] -translate-y-px" viewBox="0 0 101 9">
              <rect x="0.5" y="0.5" width="100" height="8" fill="none" stroke="#fff" />
              <path d="M1 9V4h3V3h1v1h8V3h1v1h4V3h1v1h5V3h1v1h5V3h1v1h23V3h4v-1h1v2h1v2h3V5h7v1h5V5h1v1h5V5h1V4h1v1h3v1h4V5h2v1h4v3z" fill="#fff" />
            </svg>
          }
        />
      </div>
      <div className="relative mt-[17px]">
        <Glyph>A</Glyph>
        <Row label="CPU Core 1:" value="14%" indent="ml-[24px]" bar={<Meter pct={13} />} />
        <Row label="CPU Core 2:" value="11%" indent="ml-[30px]" bar={<Meter pct={10} />} />
        <Row label="CPU Core 3:" value="47%" indent="ml-[30px]" bar={<Meter pct={46} />} />
        <Row label="CPU Core 4:" value="32%" indent="ml-[30px]" bar={<Meter pct={31} />} />
      </div>
      <Processes rows={[["exe", "17.98", "29.32"], ["nw", "1.97", "2.73"], ["conky", "1.48", "0.12"], ["Xorg", "0.49", "2.47"], ["ntpd", "0.25", "0.05"]]} />
      <div className="mt-[18px]"><Heading rule="w-[219px]">MEMORY</Heading></div>
      <div className="relative mt-[17px]">
        <Glyph>m</Glyph>
        <Row label="RAM:" value="2.34G / 3.76G" indent="ml-[32px]" bar={<Meter pct={61} />} />
        <Row label="Swap:" value="0B / 0B" indent="ml-[30px]" bar={<Meter pct={0} />} />
      </div>
      <Processes rows={[["exe", "17.98", "29.32"], ["subl3", "0.00", "5.98"], ["nw", "1.97", "2.73"], ["Xorg", "0.49", "2.47"], ["exe", "0.25", "1.82"]]} />
      <div className="mt-[18px]"><Heading rule="w-[230px]">DRIVES</Heading></div>
      <div className="relative mt-[17px]">
        <Glyph>e</Glyph>
        <Row label="Root  -  SSD:" value="22.6G / 23.9G" indent="ml-[22px]" bar={<Meter pct={94} />} />
        <Row label="I/O Read:" value="0B" indent="ml-[30px]" bar={<Graph />} />
        <Row label="I/O Write:" value="0B" indent="ml-[30px]" bar={<Graph />} />
      </div>
      <div className="relative mt-[17px]">
        <Glyph>4</Glyph>
        <Row label="Storage  -  HDD:" value="0B / 0B" indent="ml-[23px]" bar={<Meter pct={0} />} />
        <Row label="I/O Read:" value="0B" indent="ml-[30px]" bar={<Graph />} />
        <Row label="I/O Write:" value="0B" indent="ml-[30px]" bar={<Graph />} />
      </div>
      <div className="mt-[18px]"><Heading rule="w-[210px]">NETWORK</Heading></div>
      <div className="relative mt-[17px]">
        <Glyph>q</Glyph>
        <Row label="Eth Up:" value="0B" indent="ml-[24px]" bar={<Graph />} />
        <Row label="Eth Down:" value="0B" indent="ml-[30px]" bar={<Graph />} />
      </div>
    </div>
  );
}

export default function App() {
  return (
    <div className="flex h-[1080px] w-[2560px] flex-col overflow-hidden bg-[#5e356f]">
      <TopBar />
      <div className="flex flex-1 items-start">
        <Dock />
        <div className="mt-[164px] ml-[592px]">
          <AppWindow />
        </div>
        <div className="ml-auto">
          <SystemMonitor />
        </div>
      </div>
    </div>
  );
}
